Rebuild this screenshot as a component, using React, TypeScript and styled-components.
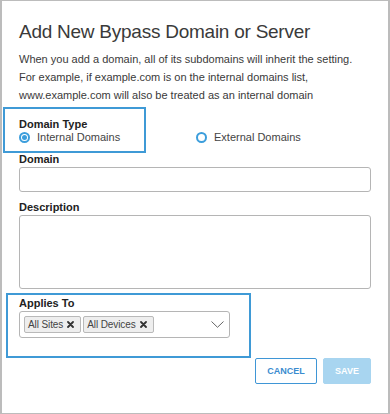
import React from "react";
import styled, { createGlobalStyle } from "styled-components";

const Global = createGlobalStyle`
  html, body { margin: 0; padding: 0; background: #fff; }
  body { font-family: "Liberation Sans", Arial, Helvetica, sans-serif; }
  * { box-sizing: border-box; }
`;

const Card = styled.div`
  width: 390px;
  height: 414px;
  background: #fff;
  border: 1px solid #bcbcbc;
  border-left-width: 2px;
  border-right-width: 2px;
  padding: 19px 17px 0 17px;
  display: flex;
  flex-direction: column;
  color: #3a3a3a;
`;

const Title = styled.h1`
  margin: 0;
  font-size: 19px;
  letter-spacing: -0.25px;
  line-height: 24px;
  font-weight: 300;
  color: #3a3a3a;
`;

const Intro = styled.p`
  margin: 6px 0 0 0;
  font-size: 11px;
  line-height: 18px;
  color: #3a3a3a;
`;

const Section = styled.div<{ $pt: number }>`
  position: relative;
  padding-top: ${(p) => p.$pt}px;
`;

const Highlight = styled.div<{ $top: number; $left: number; $w: number; $h: number }>`
  position: absolute;
  top: ${(p) => p.$top}px;
  left: ${(p) => p.$left}px;
  width: ${(p) => p.$w}px;
  height: ${(p) => p.$h}px;
  border: 2px solid #3f9ad6;
  pointer-events: none;
`;

const Legend = styled.div`
  font-size: 11px;
  line-height: 12px;
  font-weight: 700;
  color: #222;
`;

const RadioGroup = styled.div`
  display: grid;
  grid-template-columns: 177px auto;
`;

const RadioOption = styled.label`
  display: flex;
  align-items: center;
  gap: 7px;
  font-size: 11px;
  line-height: 14px;
  color: #444;
`;

const RadioCircle = styled.span<{ $checked?: boolean }>`
  width: 11px;
  height: 11px;
  border-radius: 50%;
  border: 2px solid #3c9edc;
  display: inline-flex;
  align-items: center;
  justify-content: center;
  flex: none;
  &::after {
    content: "";
    width: 5px;
    height: 5px;
    border-radius: 50%;
    background: ${(p) => (p.$checked ? "#3c9edc" : "transparent")};
  }
`;

const Field = styled.div<{ $mt?: number }>`
  margin-top: ${(p) => (p.$mt ?? 8)}px;
  display: flex;
  flex-direction: column;
  gap: 1px;
`;

const Label = styled.label`
  font-size: 11px;
  line-height: 14px;
  font-weight: 700;
  color: #222;
`;

const Input = styled.div<{ $h: number }>`
  height: ${(p) => p.$h}px;
  border: 1px solid #b5b5b5;
  border-radius: 3px;
  background: #fff;
`;

const SelectBox = styled.div`
  width: 211px;
  height: 27px;
  border: 1px solid #b5b5b5;
  border-radius: 3px;
  display: flex;
  align-items: center;
  padding: 0 5px 0 4px;
  gap: 2px;
`;

const Tag = styled.span`
  display: inline-flex;
  align-items: center;
  height: 17px;
  padding: 0 6px 0 3px;
  gap: 4px;
  background: #eeeeee;
  border: 1px solid #b9b9b9;
  border-radius: 2px;
  font-size: 10px;
  letter-spacing: -0.1px;
  color: #444;
`;

const Chevron = styled.svg`
  margin-left: auto;
  flex: none;
`;

const Actions = styled.div`
  margin-top: 20px;
  display: flex;
  justify-content: flex-end;
  gap: 6px;
`;

const Button = styled.button<{ $primary?: boolean }>`
  height: 26px;
  width: ${(p) => (p.$primary ? 48 : 62)}px;
  border-radius: 2px;
  font-family: inherit;
  font-size: 9px;
  font-weight: 700;
  padding: 0;
  border: 1px solid ${(p) => (p.$primary ? "#a8d5f0" : "#3f96d6")};
  background: ${(p) => (p.$primary ? "#a8d5f0" : "#fff")};
  color: ${(p) => (p.$primary ? "#fff" : "#3a8ccf")};
`;

const XIcon = () => (
  <svg width="7" height="7" viewBox="0 0 7 7">
    <path d="M1 1 L6 6 M6 1 L1 6" stroke="#333" strokeWidth="1.8" strokeLinecap="round" />
  </svg>
);

export default function App() {
  return (
    <>
      <Global />
      <Card>
        <Title>Add New Bypass Domain or Server</Title>
        <Intro>
          When you add a domain, all of its subdomains will inherit the setting.
          <br />
          For example, if example.com is on the internal domains list,
          <br />
          www.example.com will also be treated as an internal domain
        </Intro>

        <Section $pt={14}>
          <Highlight $top={3} $left={-16} $w={143} $h={46} />
          <Legend>Domain Type</Legend>
          <RadioGroup>
            <RadioOption>
              <RadioCircle $checked />
              Internal Domains
            </RadioOption>
            <RadioOption>
              <RadioCircle />
              External Domains
            </RadioOption>
          </RadioGroup>
        </Section>

        <Field>
          <Label>Domain</Label>
          <Input $h={25} />
        </Field>

        <Field>
          <Label>Description</Label>
          <Input $h={74} />
        </Field>

        <Section $pt={7}>
          <Highlight $top={4} $left={-13} $w={245} $h={65} />
          <Field $mt={0}>
            <Label>Applies To</Label>
            <SelectBox>
              <Tag>
                All Sites <XIcon />
              </Tag>
              <Tag>
                All Devices <XIcon />
              </Tag>
              <Chevron width="13" height="7" viewBox="0 0 13 7">
                <path d="M0.5 0.5 L6.5 6.3 L12.5 0.5" fill="none" stroke="#666" strokeWidth="1" />
              </Chevron>
            </SelectBox>
          </Field>
        </Section>

        <Actions>
          <Button>CANCEL</Button>
          <Button $primary>SAVE</Button>
        </Actions>
      </Card>
    </>
  );
}
